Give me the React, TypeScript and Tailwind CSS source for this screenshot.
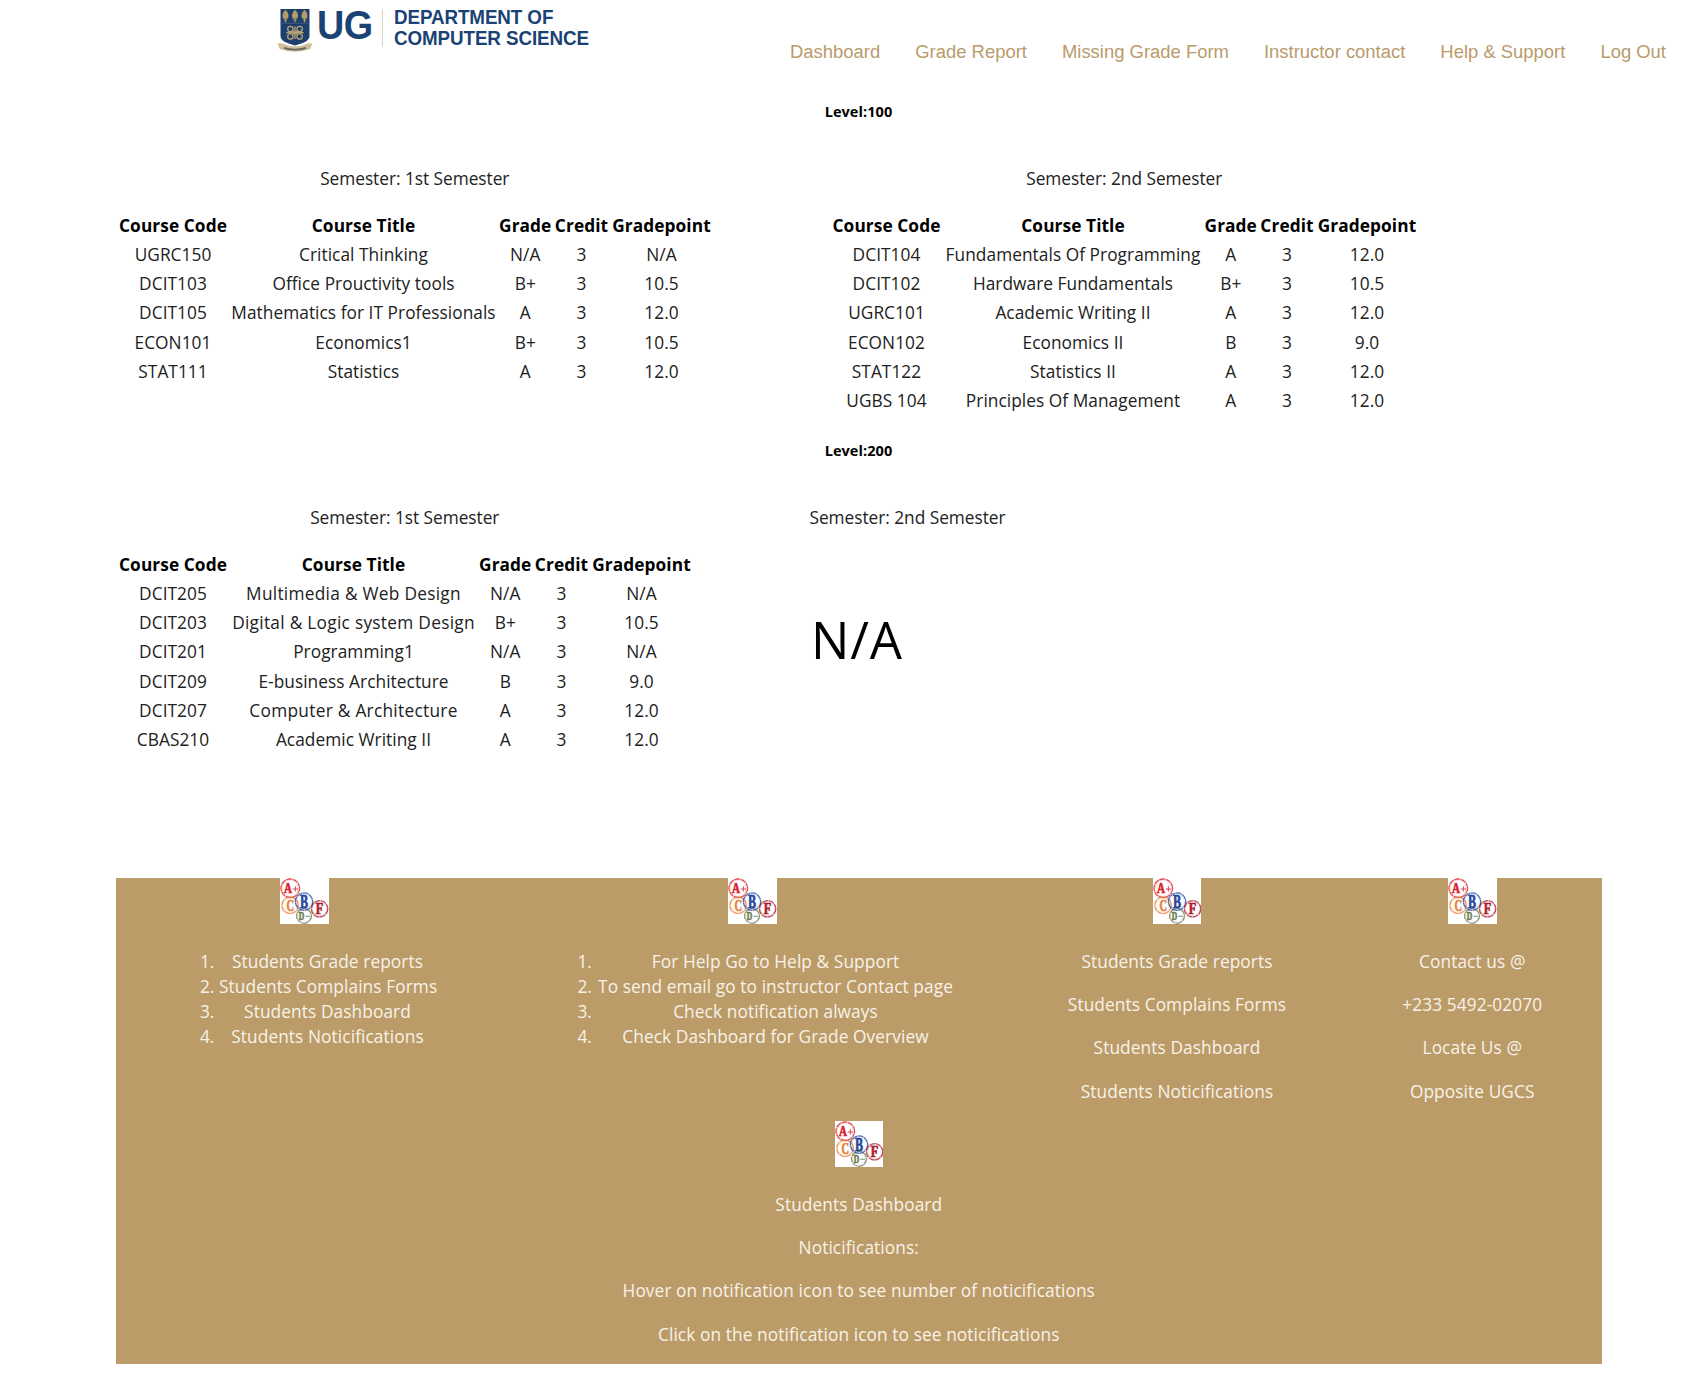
type Course = [code: string, title: string, grade: string, credit: string, point: string];

const level100First: Course[] = [
  ['UGRC150', 'Critical Thinking', 'N/A', '3', 'N/A'],
  ['DCIT103', 'Office Prouctivity tools', 'B+', '3', '10.5'],
  ['DCIT105', 'Mathematics for IT Professionals', 'A', '3', '12.0'],
  ['ECON101', 'Economics1', 'B+', '3', '10.5'],
  ['STAT111', 'Statistics', 'A', '3', '12.0'],
];

const level100Second: Course[] = [
  ['DCIT104', 'Fundamentals Of Programming', 'A', '3', '12.0'],
  ['DCIT102', 'Hardware Fundamentals', 'B+', '3', '10.5'],
  ['UGRC101', 'Academic Writing II', 'A', '3', '12.0'],
  ['ECON102', 'Economics II', 'B', '3', '9.0'],
  ['STAT122', 'Statistics II', 'A', '3', '12.0'],
  ['UGBS 104', 'Principles Of Management', 'A', '3', '12.0'],
];

const level200First: Course[] = [
  ['DCIT205', 'Multimedia & Web Design', 'N/A', '3', 'N/A'],
  ['DCIT203', 'Digital & Logic system Design', 'B+', '3', '10.5'],
  ['DCIT201', 'Programming1', 'N/A', '3', 'N/A'],
  ['DCIT209', 'E-business Architecture', 'B', '3', '9.0'],
  ['DCIT207', 'Computer & Architecture', 'A', '3', '12.0'],
  ['CBAS210', 'Academic Writing II', 'A', '3', '12.0'],
];

const navItems = ['Dashboard', 'Grade Report', 'Missing Grade Form', 'Instructor contact', 'Help & Support', 'Log Out'];

function Crest() {
  return (
    <svg width="36" height="44" viewBox="0 0 36 44" className="shrink-0">
      <path d="M3.5 0H32.5V27Q32.5 33 18 36.5Q3.5 33 3.5 27Z" fill="#1c3f6e" />
      <path d="M3.5 14.2H32.5" stroke="#4d6179" strokeWidth="0.8" />
      <g fill="#b59c68">
        {[8.5, 18, 27.5].map((x) => (
          <g key={x}>
            <path d={`M${x} 0.8L${x + 2} 3.2L${x + 3} 6L${x + 2.6} 9.6H${x - 2.6}L${x - 3} 6L${x - 2} 3.2Z`} />
            <rect x={x - 0.6} y="9" width="1.2" height="4.3" />
            <rect x={x - 1.8} y="10.5" width="3.6" height="0.9" />
          </g>
        ))}
      </g>
      <g fill="none" stroke="#b8a273" strokeWidth="1.3">
        <circle cx="13.4" cy="20" r="2.7" />
        <circle cx="22.6" cy="20" r="2.7" />
        <circle cx="13.4" cy="27.4" r="2.7" />
        <circle cx="22.6" cy="27.4" r="2.7" />
        <path d="M9.3 23.7H26.7M18 17.5V30M14.8 21.5L21.2 26M21.2 21.5L14.8 26" />
      </g>
      <path d="M0.6 34.6L4.5 34.2Q18 40.5 31.5 34.2L35.4 34.6L33.2 40Q18 45.6 2.8 40Z" fill="#cfbf9b" />
      <path d="M7 38.8Q18 42.4 29 38.8" fill="none" stroke="#6b675e" strokeWidth="1.8" />
    </svg>
  );
}

function Logo() {
  return (
    <div className="ml-[277px] flex h-[60px] items-start pt-[9px] font-['Liberation_Sans',sans-serif] font-bold text-[#1b4274]">
      <Crest />
      <span className="ml-[4px] mt-[-4px] w-[65px] origin-left scale-x-[0.91] text-[41.5px] leading-[40px] tracking-[-0.5px]">UG</span>
      <span className="h-[38px] w-px bg-[#ddd3c1]" />
      <span className="ml-[11px] mt-[-2px] origin-left scale-x-[0.94] whitespace-nowrap text-[20px] leading-[20.5px] tracking-[-0.1px]">
        DEPARTMENT OF
        <br />
        COMPUTER SCIENCE
      </span>
    </div>
  );
}

const stamps = [
  { x: 10.2, y: 10.2, r: 9.8, color: '#d8242f', letter: 'A', size: 15, width: 8, dx: -2.2, mark: 'M12.6 10.8H17.8M15.2 8.2V13.4' },
  { x: 10, y: 27, r: 8.8, color: '#e87f3c', letter: 'C', size: 17, width: 7.5, dx: 0.3, mark: '' },
  { x: 23.8, y: 37.4, r: 8, color: '#6f7a55', letter: 'D', size: 12.5, width: 5.5, dx: -2.5, mark: 'M25 37.8H29.6' },
  { x: 23.8, y: 23.4, r: 9.2, color: '#24479a', letter: 'B', size: 18, width: 8, dx: 0, mark: '' },
  { x: 39.2, y: 30.5, r: 8.7, color: '#a8202f', letter: 'F', size: 16, width: 7.5, dx: 0, mark: '' },
];

function GradeStamps() {
  return (
    <svg width="48.5" height="46.5" viewBox="0 0 48 46" preserveAspectRatio="none" className="mx-auto block bg-white">
      {stamps.map((s) => (
        <g key={s.letter}>
          <circle cx={s.x} cy={s.y} r={s.r - 0.6} fill="none" stroke={s.color} strokeWidth="1.3" strokeDasharray="6 0.5" opacity="0.8" />
          <circle cx={s.x} cy={s.y} r={s.r - 1.9} fill="none" stroke={s.color} strokeWidth="0.4" opacity="0.35" />
          <text
            x={s.x + s.dx}
            y={s.y + s.size * 0.34}
            textAnchor="middle"
            textLength={s.width}
            lengthAdjust="spacingAndGlyphs"
            fill={s.color}
            stroke={s.color}
            strokeWidth="0.7"
            fontFamily="Liberation Serif, serif"
            fontWeight="bold"
            fontSize={s.size}
          >
            {s.letter}
          </text>
          {s.mark && <path d={s.mark} stroke={s.color} strokeWidth="1" opacity="0.85" />}
        </g>
      ))}
    </svg>
  );
}

function SemesterTable({ name, rows, titleCol }: { name: string; rows: Course[]; titleCol: string }) {
  return (
    <div>
      <p className="h-6 text-center leading-6 tracking-[-0.03px]">{name}</p>
      <table className="mt-[20px] table-fixed border-collapse text-center">
        <colgroup>
          <col className="w-[113px]" />
          <col className={titleCol} />
          <col className="w-[55.5px]" />
          <col className="w-[57px]" />
          <col className="w-[103px]" />
        </colgroup>
        <thead>
          <tr className="h-[29px] text-black tracking-[0.08px]">
            {['Course Code', 'Course Title', 'Grade', 'Credit', 'Gradepoint'].map((h) => (
              <th key={h} className="whitespace-nowrap p-0 text-center font-bold leading-6">{h}</th>
            ))}
          </tr>
        </thead>
        <tbody>
          {rows.map((row) => (
            <tr key={row[0]} className="h-[29px] nth-3:h-[30px]">
              {row.map((cell, i) => (
                <td key={i} className={`whitespace-nowrap p-0 leading-6 ${cell.includes('&') ? 'tracking-[0.28px]' : ''}`}>{cell}</td>
              ))}
            </tr>
          ))}
        </tbody>
      </table>
    </div>
  );
}

function LevelHeading({ children }: { children: string }) {
  return <h5 className="h-6 text-center text-[14.5px] font-bold leading-6 tracking-[0.08px] text-black">{children}</h5>;
}

function NumberedList({ items, className }: { items: string[]; className: string }) {
  return (
    <ol className={className}>
      {items.map((item, i) => (
        <li key={item} className="flex h-[25px] leading-[25px]">
          <span className="w-[19px] shrink-0 tracking-[-0.2px]">{i + 1}.</span>
          <span className="flex-1 whitespace-nowrap text-center">{item}</span>
        </li>
      ))}
    </ol>
  );
}

function Lines({ items }: { items: string[] }) {
  return (
    <div className="mt-[24.5px] flex flex-col gap-[18.4px] text-center">
      {items.map((item) => (
        <p key={item} className="leading-[25px]">{item}</p>
      ))}
    </div>
  );
}

export default function App() {
  return (
    <div className="h-[1387px] w-[1700px] overflow-hidden bg-white font-['Open_Sans',sans-serif] text-[17.3px] tracking-[0.05px] text-[#212121]">
      <header className="flex h-[100px] items-start justify-between">
        <Logo />
        <nav className="mr-[34px] mt-[40px] flex gap-[35px] font-['Liberation_Sans',sans-serif] text-[18.45px] leading-6 tracking-normal text-[#b99b6b]">
          {navItems.map((item) => (
            <a key={item} className="whitespace-nowrap">{item}</a>
          ))}
        </nav>
      </header>

      <main className="ml-[115px] h-[777.5px] w-[1487px]">
        <section className="h-[339px]">
          <LevelHeading>Level:100</LevelHeading>
          <div className="ml-[1.5px] mt-[43px] flex gap-[117px]">
            <SemesterTable name="Semester: 1st Semester" rows={level100First} titleCol="w-[268px]" />
            <SemesterTable name="Semester: 2nd Semester" rows={level100Second} titleCol="w-[260px]" />
          </div>
        </section>
        <section>
          <LevelHeading>Level:200</LevelHeading>
          <div className="ml-[1.5px] mt-[43px] flex gap-[116.5px]">
            <SemesterTable name="Semester: 1st Semester" rows={level200First} titleCol="w-[248px]" />
            <div>
              <p className="h-6 leading-6 tracking-[-0.03px]">Semester: 2nd Semester</p>
              <p className="ml-[1.5px] mt-[79px] text-[51px] leading-[60px] tracking-[0.8px] text-black">N/A</p>
            </div>
          </div>
        </section>
      </main>

      <footer className="ml-[115.5px] h-[486px] w-[1486.5px] bg-[#bb9c69] tracking-[0.09px] text-[#f8f2e8]">
        <div className="grid h-[243px] grid-cols-[378px_518px_331px_259.5px]">
          <div>
            <GradeStamps />
            <NumberedList
              className="ml-[84.5px] mt-[24.5px] w-[236px]"
              items={['Students Grade reports', 'Students Complains Forms', 'Students Dashboard', 'Students Noticifications']}
            />
          </div>
          <div>
            <GradeStamps />
            <NumberedList
              className="ml-[84px] mt-[24.5px] w-[377px]"
              items={[
                'For Help Go to Help & Support',
                'To send email go to instructor Contact page',
                'Check notification always',
                'Check Dashboard for Grade Overview',
              ]}
            />
          </div>
          <div>
            <GradeStamps />
            <Lines items={['Students Grade reports', 'Students Complains Forms', 'Students Dashboard', 'Students Noticifications']} />
          </div>
          <div>
            <GradeStamps />
            <Lines items={['Contact us @', '+233 5492-02070', 'Locate Us @', 'Opposite UGCS']} />
          </div>
        </div>
        <GradeStamps />
        <Lines
          items={[
            'Students Dashboard',
            'Noticifications:',
            'Hover on notification icon to see number of noticifications',
            'Click on the notification icon to see noticifications',
          ]}
        />
      </footer>
    </div>
  );
}
